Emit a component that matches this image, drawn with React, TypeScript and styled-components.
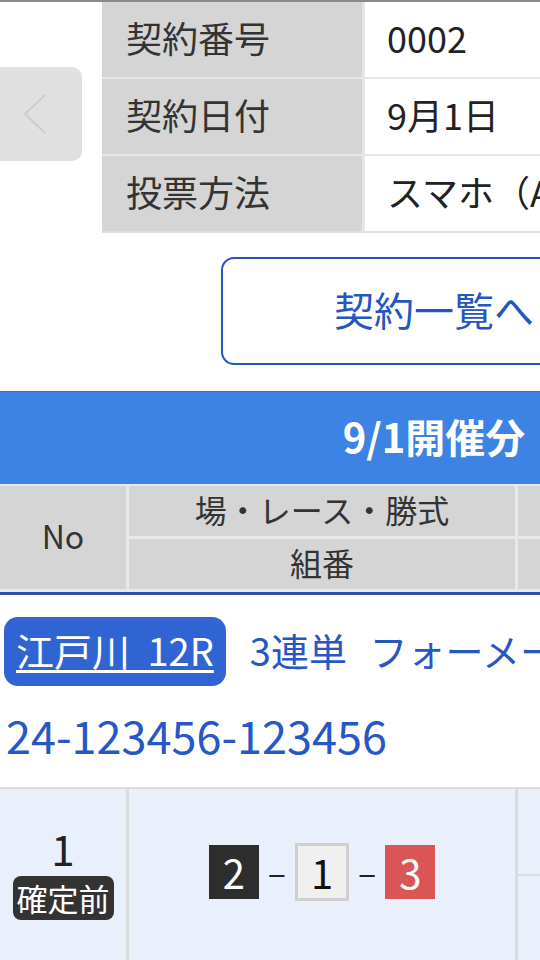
import * as React from "react";
import styled, { createGlobalStyle } from "styled-components";

const GlobalStyle = createGlobalStyle`
  html, body {
    margin: 0;
    padding: 0;
    background: #ffffff;
    overflow: hidden;
  }
  body {
    font-family: "Noto Sans CJK JP", "Noto Sans", sans-serif;
    color: #333333;
  }
`;

const infoRows = [
  { label: "契約番号", value: "0002" },
  { label: "契約日付", value: "9月1日" },
  { label: "投票方法", value: "スマホ（App）" },
];

const boats = [
  { num: "2", tone: "black" },
  { num: "1", tone: "white" },
  { num: "3", tone: "red" },
] as const;

export default function App() {
  return (
    <Page>
      <GlobalStyle />
      <TopRule />
      <InfoSection>
        <SideButton aria-label="前へ">
          <svg width="82" height="94" viewBox="0 0 82 94">
            <polyline
              points="45,28 25,47 45,66"
              fill="none"
              stroke="#cdcdcd"
              strokeWidth="2"
            />
          </svg>
        </SideButton>
        <InfoTable>
          {infoRows.map((row) => (
            <React.Fragment key={row.label}>
              <InfoLabel>{row.label}</InfoLabel>
              <InfoValue>{row.value}</InfoValue>
            </React.Fragment>
          ))}
        </InfoTable>
        <SideButton aria-label="次へ" />
      </InfoSection>

      <ListButton>契約一覧へ</ListButton>

      <DateBar>9/1開催分</DateBar>

      <HeadGrid>
        <HeadCell $span>No</HeadCell>
        <HeadCell>場・レース・勝式</HeadCell>
        <HeadCell />
        <HeadCell>組番</HeadCell>
        <HeadCell />
      </HeadGrid>

      <RaceInfo>
        <RaceLine>
          <VenueBadge>江戸川 12R</VenueBadge>
          <BetType>3連単 フォーメーション</BetType>
        </RaceLine>
        <TicketNo>24-123456-123456</TicketNo>
      </RaceInfo>

      <BetRow>
        <NoCell>
          <RowNumber>1</RowNumber>
          <StatusTag>確定前</StatusTag>
        </NoCell>
        <ComboCell>
          {boats.map((b, i) => (
            <React.Fragment key={b.num}>
              {i > 0 && <Dash>–</Dash>}
              <BoatBox $tone={b.tone}>{b.num}</BoatBox>
            </React.Fragment>
          ))}
        </ComboCell>
        <AmountCell>
          <AmountPart />
          <AmountPart />
        </AmountCell>
      </BetRow>
    </Page>
  );
}

const Page = styled.div`
  width: 868px;
  display: flex;
  flex-direction: column;
`;

const TopRule = styled.div`
  height: 2px;
  background: #8a8a8a;
`;

const InfoSection = styled.section`
  display: grid;
  grid-template-columns: 82px 1fr 82px;
  column-gap: 20px;
  align-items: center;
`;

const SideButton = styled.div`
  height: 94px;
  margin-bottom: 8px;
  background: #e0e0e0;
  border-radius: 0 10px 10px 0;
  display: flex;
  align-items: center;
  justify-content: center;
  &:last-child {
    border-radius: 10px 0 0 10px;
  }
`;

const InfoTable = styled.div`
  display: grid;
  grid-template-columns: 260px 1fr;
  grid-auto-rows: 75px;
  row-gap: 2px;
  column-gap: 3px;
  background: #e6e6e6;
  border-bottom: 2px solid #e0e0e0;
`;

const InfoLabel = styled.div`
  background: #d5d5d5;
  display: flex;
  align-items: center;
  padding: 0 0 5px 24px;
  font-size: 36px;
  color: #333333;
`;

const InfoValue = styled.div`
  background: #ffffff;
  display: flex;
  align-items: center;
  padding: 0 0 5px 22px;
  font-size: 36px;
  color: #222222;
  white-space: nowrap;
`;

const ListButton = styled.button`
  margin: 24px auto 0;
  width: 426px;
  height: 108px;
  border: 2px solid #2556c0;
  border-radius: 13px;
  background: #ffffff;
  color: #2556c0;
  font-family: inherit;
  font-size: 40px;
  padding: 0 0 4px;
`;

const DateBar = styled.div`
  margin-top: 26px;
  height: 93px;
  box-sizing: border-box;
  padding-bottom: 4px;
  background: #3d83e3;
  border-top: 1px solid #3574d4;
  display: flex;
  align-items: center;
  justify-content: center;
  color: #ffffff;
  font-size: 40px;
  font-weight: bold;
`;

const HeadGrid = styled.div`
  display: grid;
  grid-template-columns: 126px 386px 1fr;
  grid-template-rows: 50px 50px;
  gap: 3px;
  padding: 2px 0 3px;
  background: #e8e8e8;
  border-bottom: 3px solid #2a50a8;
`;

const HeadCell = styled.div<{ $span?: boolean }>`
  grid-row: ${(p) => (p.$span ? "span 2" : "auto")};
  background: #d5d5d5;
  display: flex;
  align-items: center;
  justify-content: center;
  padding-bottom: 5px;
  font-size: 32px;
  color: #333333;
  white-space: nowrap;
`;

const RaceInfo = styled.section`
  padding: 22px 0 0 4px;
  height: 192px;
  box-sizing: border-box;
  display: flex;
  flex-direction: column;
`;

const RaceLine = styled.div`
  display: flex;
  align-items: center;
  gap: 24px;
`;

const VenueBadge = styled.a`
  height: 69px;
  box-sizing: border-box;
  padding: 0 12px 4px 12px;
  display: flex;
  align-items: center;
  background: #3064d2;
  border-radius: 14px;
  color: #ffffff;
  font-size: 38px;
  word-spacing: 9px;
  text-decoration: underline;
  text-underline-offset: 4px;
  white-space: nowrap;
`;

const BetType = styled.span`
  padding-bottom: 4px;
  font-size: 38px;
  word-spacing: 14px;
  color: #2657c4;
  white-space: nowrap;
`;

const TicketNo = styled.div`
  margin-top: 20px;
  padding-left: 2px;
  font-size: 45px;
  line-height: 1.3;
  color: #2657c4;
`;

const BetRow = styled.div`
  display: grid;
  grid-template-columns: 126px 386px 1fr;
  column-gap: 3px;
  height: 172px;
  background: #dcdcdc;
  border-top: 2px solid #dcdcdc;
`;

const NoCell = styled.div`
  background: #e9f0fc;
  display: flex;
  flex-direction: column;
  align-items: center;
  justify-content: center;
  gap: 6px;
  padding-bottom: 4px;
`;

const RowNumber = styled.div`
  font-size: 42px;
  line-height: 44px;
  color: #222222;
`;

const StatusTag = styled.div`
  background: #333333;
  color: #ffffff;
  border-radius: 8px;
  font-size: 31px;
  line-height: 44px;
  padding: 0 4px;
`;

const ComboCell = styled.div`
  background: #e9f0fc;
  display: flex;
  align-items: center;
  justify-content: center;
  gap: 9px;
  padding-bottom: 6px;
`;

const Dash = styled.span`
  font-size: 34px;
  line-height: 1;
  color: #222222;
`;

const toneStyles = {
  black: "background: #2d2d2d; color: #ffffff; border: 1px solid #2d2d2d;",
  white: "background: #f0f0f0; color: #111111; border: 3px solid #cfcfcf;",
  red: "background: #da5656; color: #ffffff; border: 1px solid #da5656;",
};

const BoatBox = styled.span<{ $tone: "black" | "white" | "red" }>`
  ${(p) => toneStyles[p.$tone]}
  min-width: 48px;
  height: 52px;
  box-sizing: content-box;
  display: flex;
  align-items: center;
  justify-content: center;
  font-size: 40px;
`;

const AmountCell = styled.div`
  display: grid;
  grid-template-rows: 1fr 1fr;
  row-gap: 2px;
`;

const AmountPart = styled.div`
  background: #e9f0fc;
`;
